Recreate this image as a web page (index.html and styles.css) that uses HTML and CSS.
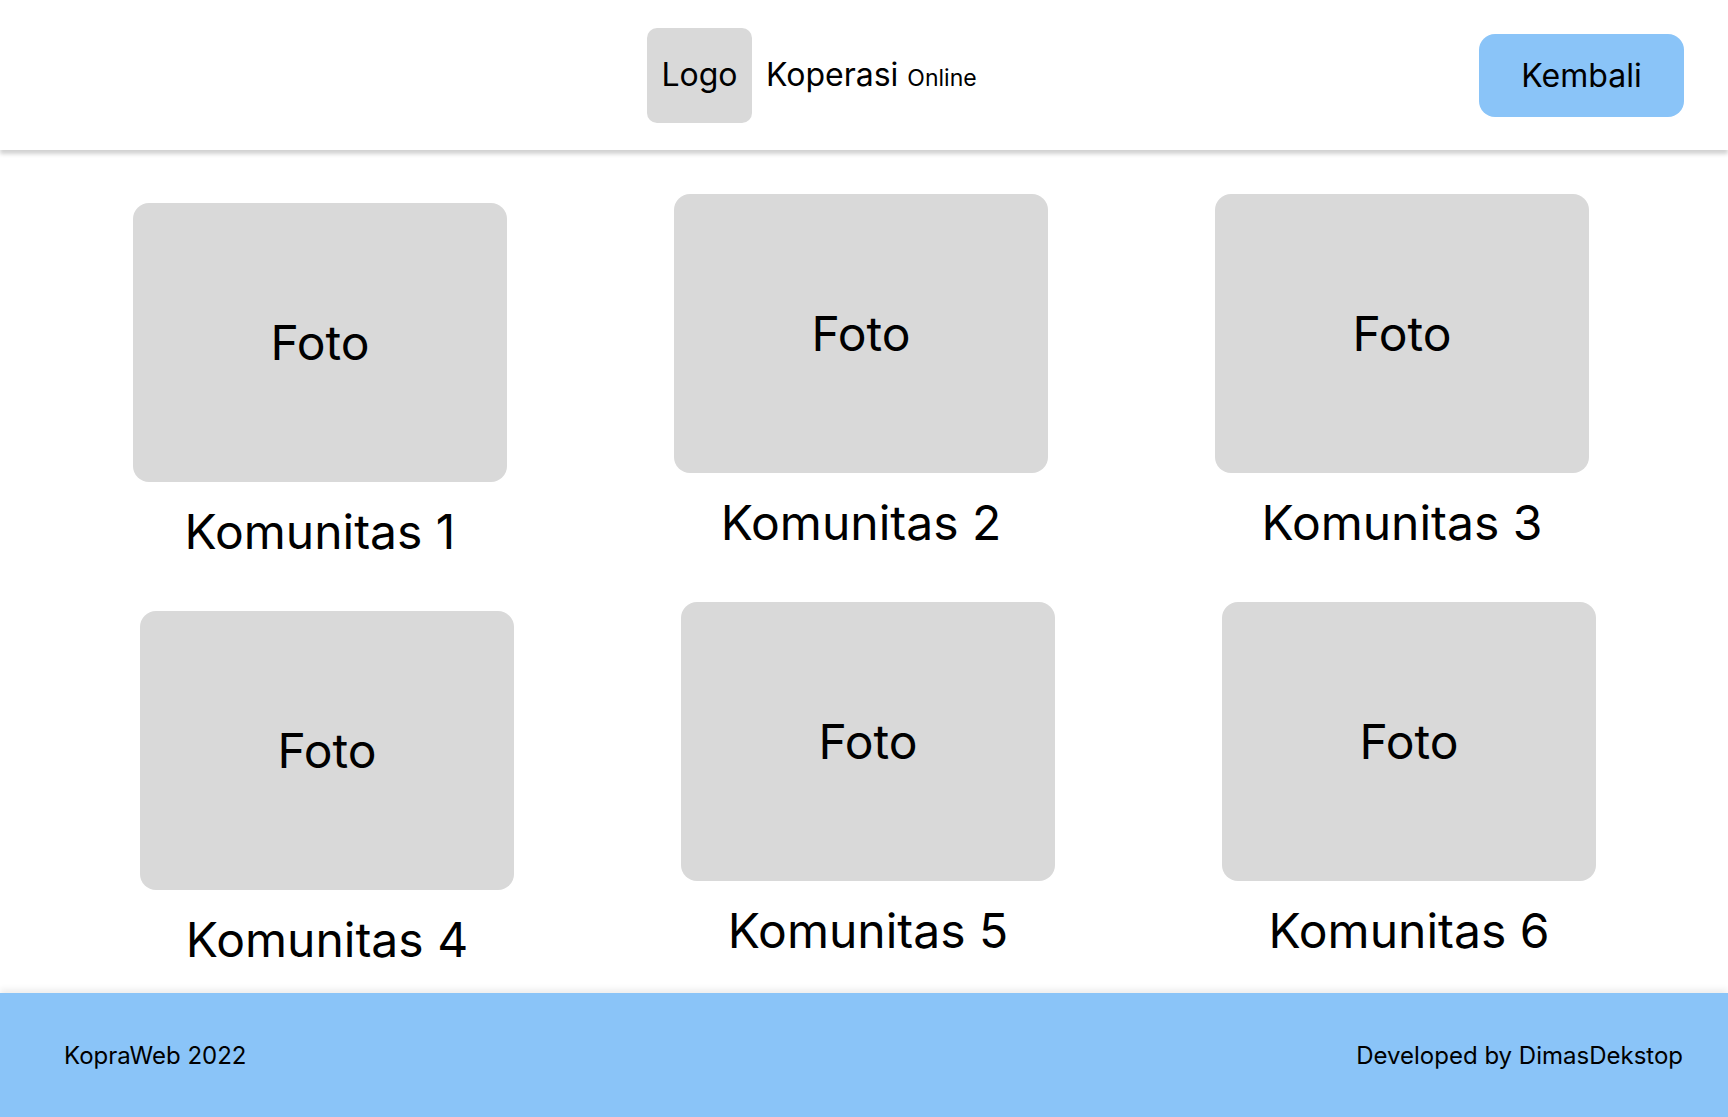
FILE: index.html
```html
<!DOCTYPE html>
<html lang="id">
<head>
<meta charset="utf-8">
<title>Komunitas - Koperasi Online</title>
<link rel="stylesheet" href="styles.css">
</head>
<body>
<div class="page">
  <header class="header">
    <div class="brand">
      <div class="logo">Logo</div>
      <div class="brand-name">Koperasi <span class="brand-sub">Online</span></div>
    </div>
    <a class="btn-back" href="#">Kembali</a>
  </header>
  <main class="main">
    <div class="row row-1">
      <div class="card card-low"><div class="photo">Foto</div><div class="label">Komunitas 1</div></div>
      <div class="card"><div class="photo">Foto</div><div class="label">Komunitas 2</div></div>
      <div class="card"><div class="photo">Foto</div><div class="label">Komunitas 3</div></div>
    </div>
    <div class="row row-2">
      <div class="card card-low"><div class="photo">Foto</div><div class="label">Komunitas 4</div></div>
      <div class="card"><div class="photo">Foto</div><div class="label">Komunitas 5</div></div>
      <div class="card"><div class="photo">Foto</div><div class="label">Komunitas 6</div></div>
    </div>
  </main>
  <footer class="footer">
    <span>KopraWeb 2022</span>
    <span>Developed by DimasDekstop</span>
  </footer>
</div>
</body>
</html>
```

FILE: styles.css
```css
* { box-sizing: border-box; }
html, body { margin: 0; padding: 0; }
body {
  font-family: Inter, "Noto Sans", sans-serif;
  color: #000;
  background: #fff;
}
.page {
  height: 100vh;
  display: flex;
  flex-direction: column;
  overflow: hidden;
}
.header {
  height: 150px;
  flex: 0 0 150px;
  display: flex;
  align-items: center;
  padding: 0 44px 0 647px;
  background: #fff;
  box-shadow: 0 4px 4px rgba(0,0,0,0.18);
  position: relative;
  z-index: 2;
}
.brand {
  display: flex;
  align-items: center;
  gap: 14px;
}
.logo {
  width: 105px;
  height: 95px;
  background: #d9d9d9;
  border-radius: 10px;
  display: flex;
  align-items: center;
  justify-content: center;
  font-size: 32px;
  line-height: 1;
}
.brand-name {
  font-size: 32px;
  line-height: 1;
}
.brand-sub {
  font-size: 23px;
}
.btn-back {
  margin-left: auto;
  width: 205px;
  height: 83px;
  border-radius: 16px;
  background: #8ac4f8;
  color: #000;
  text-decoration: none;
  font-size: 32px;
  display: flex;
  align-items: center;
  justify-content: center;
}
.main {
  flex: 1;
  padding-top: 44px;
  display: flex;
  flex-direction: column;
  gap: 41px;
}
.row {
  display: flex;
  align-items: flex-start;
  gap: 167px;
}
.row-1 { padding-left: 133px; }
.row-2 { padding-left: 140px; }
.card {
  width: 374px;
  display: flex;
  flex-direction: column;
  align-items: center;
}
.card-low { margin-top: 9px; }
.photo {
  width: 374px;
  height: 279px;
  background: #d9d9d9;
  border-radius: 16px;
  display: flex;
  align-items: center;
  justify-content: center;
  font-size: 48px;
}
.label {
  margin-top: 21px;
  font-size: 48px;
  line-height: 58px;
  text-align: center;
}
.footer {
  flex: 0 0 124px;
  height: 124px;
  background: #8ac4f8;
  display: flex;
  align-items: center;
  justify-content: space-between;
  padding: 0 45px 0 64px;
  font-size: 24px;
  box-shadow: 0 -4px 6px rgba(0,0,0,0.07);
}
```
